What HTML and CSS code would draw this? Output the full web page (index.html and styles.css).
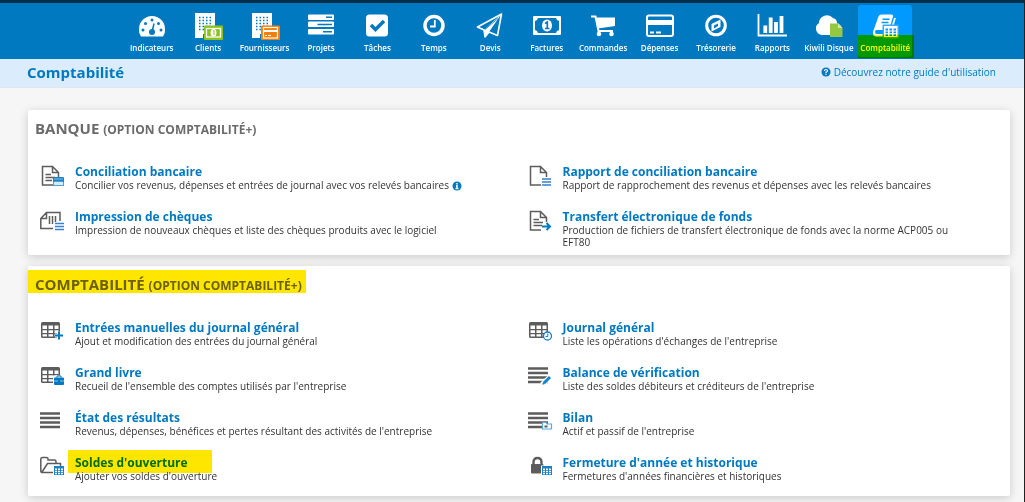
FILE: index.html
```html
<!DOCTYPE html>
<html lang="fr">
<head>
<meta charset="utf-8">
<title>Comptabilité</title>
<link rel="stylesheet" href="styles.css">
</head>
<body>
<svg class="defs" aria-hidden="true">
  <defs>
    <g id="building" fill="#fff">
      <path d="M2 1H22V26H14V22H10V26H2Z"/>
      <path d="M6 5.500H19M6 8.500H19M6 11.500H19M6 14.500H19M6 17.500H19" stroke="#0079c1" stroke-width="1.300" stroke-dasharray="1.500 2"/>
    </g>
    <g id="page" fill="none" stroke="#5c5c5c" stroke-width="1.500">
      <path d="M18.500 12V7.500L12.500 1.500H2.500V20H13M12.500 1.500V7.500H18.500"/>
    </g>
    <g id="grid">
      <rect x="1" y="1" width="19" height="16" rx="1.500" fill="#5c5c5c"/>
      <path d="M2.500 4.500H7V8H2.500ZM8.500 4.500H13V8H8.500ZM14.500 4.500H18.500V8H14.500ZM2.500 9.200H7V12H2.500ZM8.500 9.200H13V12H8.500ZM14.500 9.200H18.500V12H14.500ZM2.500 13.200H7V15.500H2.500ZM8.500 13.200H13V15.500H8.500ZM14.500 13.200H18.500V15.500H14.500Z" fill="#fff"/>
    </g>
    <path id="bars" d="M0 2.500H20M0 7H20M0 11.500H20M0 16H20" stroke="#5c5c5c" stroke-width="2.700"/>
    <g id="sheet">
      <rect x="14" y="10" width="10" height="9" fill="#1682c9"/>
      <path d="M15 12.500H17V14H15ZM18 12.500H20V14H18ZM21 12.500H23V14H21ZM15 14.700H17V16H15ZM18 14.700H20V16H18ZM21 14.700H23V16H21ZM15 16.800H17V18.200H15ZM18 16.800H20V18.200H18ZM21 16.800H23V18.200H21Z" fill="#fff"/>
    </g>
  </defs>
</svg>
<header class="topbar">
  <nav class="nav" aria-label="Navigation principale">
    <a class="nav-item" href="#"><svg class="nav-icon" viewBox="0 0 30 28"><path d="M4 24.500Q1.500 21 2 17A13 13 0 0 1 28 17Q28.500 21 26 24.500Z" fill="#fff"/><g fill="#0079c1"><circle cx="6" cy="18" r="1.500"/><circle cx="8.500" cy="11.500" r="1.500"/><circle cx="15" cy="8" r="1.500"/><circle cx="21.500" cy="11.500" r="1.500"/><circle cx="24" cy="18" r="1.500"/><circle cx="15" cy="20" r="3"/></g><path d="M15 20L17 11.500" stroke="#0079c1" stroke-width="1.500"/></svg><span>Indicateurs</span></a>
    <a class="nav-item" href="#"><svg class="nav-icon" viewBox="0 0 30 28"><use href="#building"/><rect x="11" y="13.500" width="19" height="14.500" rx="1" fill="#8cc220"/><rect x="13.500" y="16.500" width="14" height="8.500" fill="none" stroke="#fff" stroke-width="1.300"/><ellipse cx="20.500" cy="20.700" rx="3" ry="3.800" fill="#fff"/><path d="M20 19L21 18.500V23" fill="none" stroke="#8cc220"/></svg><span>Clients</span></a>
    <a class="nav-item" href="#"><svg class="nav-icon" viewBox="0 0 30 28"><use href="#building"/><rect x="11" y="13.500" width="19" height="14.500" rx="1" fill="#f57e0a"/><rect x="13.500" y="15.500" width="14" height="10.500" fill="none" stroke="#fff" stroke-width="1.200"/><path d="M13.500 19H27.500" stroke="#fff" stroke-width="2"/><path d="M15 23.500H17M18 23.500H21" stroke="#fff"/></svg><span>Fournisseurs</span></a>
    <a class="nav-item" href="#"><svg class="nav-icon" viewBox="0 0 30 28"><g fill="#fff"><rect x="2" y="2.500" width="26" height="5.500" rx="1"/><rect x="2" y="9.500" width="26" height="5.500" rx="1"/><rect x="2" y="17" width="26" height="5.500" rx="1"/></g><path d="M20 5.200H26M11.500 12.400H26M17 19.700H26" stroke="#0079c1" stroke-width="1.500"/></svg><span>Projets</span></a>
    <a class="nav-item" href="#"><svg class="nav-icon" viewBox="0 0 30 28"><rect x="4" y="2.500" width="22" height="22" rx="3.500" fill="#fff"/><path d="M9 13L13.500 17.500L22 9" fill="none" stroke="#0079c1" stroke-width="3.500"/></svg><span>Tâches</span></a>
    <a class="nav-item" href="#"><svg class="nav-icon" viewBox="0 0 30 28"><circle cx="15" cy="13.500" r="9" fill="none" stroke="#fff" stroke-width="3.500"/><path d="M15.800 8V14.500H11" fill="none" stroke="#fff" stroke-width="1.800"/></svg><span>Temps</span></a>
    <a class="nav-item" href="#"><svg class="nav-icon" viewBox="0 0 30 28"><path d="M26.500 2L2.500 15L9 18L10 25L14 20L22.500 23.500Z" fill="none" stroke="#fff" stroke-width="1.600" stroke-linejoin="round"/><path d="M26 2.500L9 18L10 25L14 20Z" fill="#fff"/><path d="M23 6.500L10 17.500" stroke="#0079c1" stroke-width=".8"/></svg><span>Devis</span></a>
    <a class="nav-item" href="#"><svg class="nav-icon" viewBox="0 0 30 28"><rect x="1" y="4" width="28" height="19" rx="1" fill="#fff"/><path d="M6 6H24Q24.500 8.500 27 9V18Q24.500 18.500 24 21H6Q5.500 18.500 3 18V9Q5.500 8.500 6 6Z" fill="#0079c1"/><ellipse cx="15" cy="13.500" rx="5" ry="6" fill="#fff"/><path d="M13 11.500L15.300 10V16M13 16.500H17.500" fill="none" stroke="#0079c1" stroke-width="1.700"/></svg><span>Factures</span></a>
    <a class="nav-item" href="#"><svg class="nav-icon" viewBox="0 0 30 28"><path d="M3 4.500H7.500L10.500 19H25" fill="none" stroke="#fff" stroke-width="2"/><path d="M7.500 5.500H27V14L10 16.500Z" fill="#fff"/><circle cx="11" cy="22" r="2.300" fill="#fff"/><circle cx="23.500" cy="22" r="2.300" fill="#fff"/></svg><span>Commandes</span></a>
    <a class="nav-item" href="#"><svg class="nav-icon" viewBox="0 0 30 28"><rect x="2" y="3.500" width="26" height="20.500" rx="2" fill="none" stroke="#fff" stroke-width="2"/><path d="M2 10.500H28" stroke="#fff" stroke-width="5"/><path d="M5 20.500H9M11 20.500H16" stroke="#fff" stroke-width="1.800"/></svg><span>Dépenses</span></a>
    <a class="nav-item" href="#"><svg class="nav-icon" viewBox="0 0 30 28"><circle cx="15" cy="13.500" r="9.300" fill="none" stroke="#fff" stroke-width="3"/><path d="M19.500 7.500V15L10.500 19.500V12Z" fill="#fff"/><path d="M13 13.500L17 11.500V14L13 16.500Z" fill="#0079c1"/></svg><span>Trésorerie</span></a>
    <a class="nav-item" href="#"><svg class="nav-icon" viewBox="0 0 30 28"><path d="M1.500 2V23.500H30" fill="none" stroke="#fff" stroke-width="1.800"/><path d="M8.300 13.500V21M13.700 5.500V21M19 10V21M24.500 4V21" stroke="#fff" stroke-width="3.800"/></svg><span>Rapports</span></a>
    <a class="nav-item" href="#"><svg class="nav-icon" viewBox="0 0 30 28"><path d="M8 23A6.500 6.500 0 0 1 5 11A8 8 0 0 1 19 6Q23 7 23 11Q28 13 28 18Q27 23 22 23Z" fill="#fff"/><path d="M16 11.500H24L28.500 16V25H16Z" fill="#94c840"/><path d="M24 11.500V16H28.500Z" fill="#d2e8a8"/></svg><span>Kiwili Disque</span></a>
    <a class="nav-item active" href="#" aria-current="page"><svg class="nav-icon" viewBox="0 0 30 28"><path d="M11.500 2.500H21.500Q23.500 2.500 23 4.500L19.500 16.500Q19 18 17 18H6.500Q5 18 5 20Q5 22 7 22H15V24.500H6.500Q3 24.500 3 21Q3 19 4 17L8.500 4.500Q9.200 2.500 11.500 2.500Z" fill="#fff"/><path d="M12.500 7.200H19.500M11.500 10.500H18.500" stroke="#0099ff" stroke-width="1.500"/><path d="M25 6L22 15.500" stroke="#fff" stroke-width="1.800"/><rect x="12.500" y="12.500" width="16.500" height="14" rx="1" fill="#32acff"/><path d="M14 14H27.500V25H14Z" fill="#fff"/><path d="M15.500 16.500H18V18.500H15.500ZM19.500 16.500H22V18.500H19.500ZM23.500 16.500H26V18.500H23.500ZM15.500 19.500H18V21.300H15.500ZM19.500 19.500H22V21.300H19.500ZM23.500 19.500H26V21.300H23.500ZM15.500 22.300H18V24H15.500ZM19.500 22.300H22V24H19.500ZM23.500 22.300H26V24H23.500Z" fill="#0099ff"/></svg><span>Comptabilité</span></a>
  </nav>
</header>
<div class="subheader">
  <h1 class="page-title">Comptabilité</h1>
  <a class="guide" href="#"><svg class="badge" viewBox="0 0 10 10"><circle cx="5" cy="5" r="4.500" fill="#0079c1"/><path d="M3.500 4Q3.500 2.500 5 2.500Q6.500 2.500 6.500 4Q6.300 5 5 5.200V6M5 6.700V8" fill="none" stroke="#fff" stroke-width="1.200"/></svg>Découvrez notre guide d'utilisation</a>
</div>
<main class="content">
  <section class="card">
    <h2 class="card-title"><span>BANQUE <small>(OPTION COMPTABILITÉ+)</small></span></h2>
    <div class="entries">
      <article class="entry"><svg class="entry-icon" viewBox="0 0 26 22"><use href="#page"/><path d="M5.500 9.500H11M5.500 12.500H15M5.500 15.500H12" stroke="#5c5c5c" stroke-width="1.500"/><rect x="13" y="12" width="11" height="9" rx="1" fill="#1682c9"/><path d="M14 14H23M14 17H23V20H14Z" fill="#d7ecfb" stroke="#d7ecfb" stroke-width=".6"/></svg>
        <div><h3 class="entry-title"><a href="#">Conciliation bancaire</a></h3><p class="entry-text">Concilier vos revenus, dépenses et entrées de journal avec vos relevés bancaires <svg class="badge" viewBox="0 0 10 10"><circle cx="5" cy="5" r="4.500" fill="#0079c1"/><path d="M5 2V3.500M4 4.700H5V7.500M3.500 7.500H6.500" fill="none" stroke="#fff" stroke-width="1.400"/></svg></p></div></article>
      <article class="entry"><svg class="entry-icon" viewBox="0 0 26 22"><use href="#page"/><path d="M14 14H23M14 17H23M14 20H23" stroke="#3480d3" stroke-width="1.300"/></svg>
        <div><h3 class="entry-title"><a href="#">Rapport de conciliation bancaire</a></h3><p class="entry-text">Rapport de rapprochement des revenus et dépenses avec les relevés bancaires</p></div></article>
      <article class="entry"><svg class="entry-icon" viewBox="0 0 26 22"><path d="M13 18.500H.8V8.500L6.500 2.500H20V11M6.500 2.500V8.500H.8M9.500 6V14M12.500 6V14M15.500 6V12" fill="none" stroke="#5c5c5c" stroke-width="1.500"/><path d="M15 13.500H24M15 16.500H24M15 19.500H24" stroke="#3480d3" stroke-width="1.400"/></svg>
        <div><h3 class="entry-title"><a href="#">Impression de chèques</a></h3><p class="entry-text">Impression de nouveaux chèques et liste des chèques produits avec le logiciel</p></div></article>
      <article class="entry"><svg class="entry-icon" viewBox="0 0 26 22"><use href="#page"/><path d="M5.500 9.500H11M5.500 12.500H15M5.500 15.500H14" stroke="#5c5c5c" stroke-width="1.500"/><path d="M14 16.500H22M18.500 13L22 16.500L18.500 20" fill="none" stroke="#0079c1" stroke-width="2"/></svg>
        <div><h3 class="entry-title"><a href="#">Transfert électronique de fonds</a></h3><p class="entry-text">Production de fichiers de transfert électronique de fonds avec la norme ACP005 ou EFT80</p></div></article>
    </div>
  </section>
  <section class="card">
    <h2 class="card-title"><span class="marked">COMPTABILITÉ <small>(OPTION COMPTABILITÉ+)</small></span></h2>
    <div class="entries">
      <article class="entry"><svg class="entry-icon" viewBox="0 0 26 22"><use href="#grid"/><path d="M15 14.500H23M19 10.500V18.500" stroke="#fff" stroke-width="4"/><path d="M15 14.500H23M19 10.500V18.500" stroke="#0079c1" stroke-width="2"/></svg>
        <div><h3 class="entry-title"><a href="#">Entrées manuelles du journal général</a></h3><p class="entry-text">Ajout et modification des entrées du journal général</p></div></article>
      <article class="entry"><svg class="entry-icon" viewBox="0 0 26 22"><use href="#grid"/><circle cx="19.500" cy="15" r="4" fill="#fff" stroke="#1682c9" stroke-width="1.300"/><path d="M19.800 12.500V15.500H17.500" fill="none" stroke="#1682c9"/></svg>
        <div><h3 class="entry-title"><a href="#">Journal général</a></h3><p class="entry-text">Liste les opérations d'échanges de l'entreprise</p></div></article>
      <article class="entry"><svg class="entry-icon" viewBox="0 0 26 22"><use href="#grid"/><rect x="13" y="9.500" width="12" height="10" fill="#fff"/><rect x="14" y="11.500" width="10" height="7.500" rx="1" fill="#0079c1"/><path d="M17 11.500V10H21V11.500" fill="none" stroke="#0079c1"/><path d="M14 15H18M20 15H24" stroke="#a9d5f2" stroke-width=".8"/></svg>
        <div><h3 class="entry-title"><a href="#">Grand livre</a></h3><p class="entry-text">Recueil de l'ensemble des comptes utilisés par l'entreprise</p></div></article>
      <article class="entry"><svg class="entry-icon" viewBox="0 0 26 22"><use href="#bars"/><path d="M14 18.500L23 10" stroke="#fff" stroke-width="5"/><path d="M16 17L22 11" stroke="#1682c9" stroke-width="3"/><path d="M14.300 18.700L15 15.800L17.200 18Z" fill="#1682c9"/></svg>
        <div><h3 class="entry-title"><a href="#">Balance de vérification</a></h3><p class="entry-text">Liste des soldes débiteurs et créditeurs de l'entreprise</p></div></article>
      <article class="entry"><svg class="entry-icon" viewBox="0 0 26 22"><use href="#bars"/></svg>
        <div><h3 class="entry-title"><a href="#">État des résultats</a></h3><p class="entry-text">Revenus, dépenses, bénéfices et pertes résultant des activités de l'entreprise</p></div></article>
      <article class="entry"><svg class="entry-icon" viewBox="0 0 26 22"><use href="#bars"/><path d="M14.500 18V11.500H18L19 13H23.500V18Z" fill="#fff" stroke="#5aa9dd" stroke-width="1.200"/><path d="M16.500 15.500H19.500" stroke="#5c5c5c" stroke-width="2"/></svg>
        <div><h3 class="entry-title"><a href="#">Bilan</a></h3><p class="entry-text">Actif et passif de l'entreprise</p></div></article>
      <article class="entry"><svg class="entry-icon" viewBox="0 0 26 22"><path d="M13 16.500H2.500Q.8 16.500.8 15V3Q.8 1.500 2.500 1.500H6.500Q8 1.500 8 3V4H14.500Q16 4 16 5.500V7.500H7.500L2 16M16 7.500H20.500V10" fill="none" stroke="#5c5c5c" stroke-width="1.500"/><use href="#sheet"/></svg>
        <div><h3 class="entry-title"><a class="marked marked-link" href="#">Soldes d'ouverture</a></h3><p class="entry-text">Ajouter vos soldes d'ouverture</p></div></article>
      <article class="entry"><svg class="entry-icon" viewBox="0 0 26 22"><path d="M5.500 9V6Q5.500 2 9.500 2Q13.500 2 13.500 6V9" fill="none" stroke="#5c5c5c" stroke-width="2.400"/><rect x="3" y="8" width="12.500" height="9.500" rx="1" fill="#5c5c5c"/><rect x="13" y="9.500" width="12" height="10" fill="#fff"/><use href="#sheet"/></svg>
        <div><h3 class="entry-title"><a href="#">Fermeture d'année et historique</a></h3><p class="entry-text">Fermetures d'années financières et historiques</p></div></article>
    </div>
  </section>
</main>
</body>
</html>
```
FILE: styles.css
```css
* {
  box-sizing: border-box;
}

body {
  margin: 0;
  min-height: 100vh;
  border-right: 1px solid #222;
  background: #f6f6f6;
  color: #333;
  font-family: "Open Sans", "Noto Sans", sans-serif;
  font-size: 10px;
  line-height: 12px;
}

a {
  color: #0079c1;
  text-decoration: none;
}

.defs {
  display: block;
  width: 0;
  height: 0;
}

.topbar {
  padding-left: 13px;
  border-top: 3px solid #033048;
  background: #0079c1;
}

.nav {
  display: grid;
  grid-template-columns: repeat(14, 1fr);
  gap: 2px;
  max-width: 788px;
  margin: 0 auto;
  padding: 2px 0;
}

.nav-item {
  position: relative;
  display: flex;
  flex-direction: column;
  align-items: center;
  gap: 2px;
  height: 52px;
  padding-top: 7px;
  border-radius: 3px;
  color: #fff;
  font-size: 8px;
  font-weight: 600;
  white-space: nowrap;
}

.nav-icon {
  width: 30px;
  height: 28px;
  flex: none;
}

.nav-item.active {
  background: #0099ff;
}

.nav-item.active::after {
  content: "";
  position: absolute;
  inset: 30px -2px -1px 0;
  background: #ff0;
  mix-blend-mode: multiply;
}

.subheader {
  display: flex;
  align-items: center;
  justify-content: space-between;
  height: 29px;
  padding: 0 28px 2px 27px;
  border-bottom: 1px solid #dfe6ec;
  background: #dbedfd;
}

.page-title {
  margin: 0;
  color: #0079c1;
  font-size: 15px;
  font-weight: 700;
  line-height: 20px;
}

.guide {
  display: flex;
  align-items: center;
  gap: 3px;
}

.badge {
  width: 10px;
  height: 10px;
  vertical-align: -2px;
}

.content {
  display: flex;
  flex-direction: column;
  gap: 11px;
  padding: 22px 14px 5px 28px;
}

.card {
  padding: 8px 8px 7px 7px;
  border-radius: 2px;
  background: #fff;
  box-shadow: 0 2px 10px rgba(0, 0, 0, 0.18);
}

.card-title {
  margin: 0 0 25px;
  color: #6b6b6b;
  font-size: 15px;
  font-weight: 700;
  line-height: 20px;
}

.card-title small {
  font-size: 12px;
}

.marked {
  position: relative;
}

.marked::after {
  content: "";
  position: absolute;
  inset: -4px -4px 1px -7px;
  background: #ffe600;
  mix-blend-mode: multiply;
}

.marked-link::after {
  inset: -4px -24px -2px -7px;
}

.entries {
  display: grid;
  grid-template-columns: 1fr 1fr;
  gap: 12px 8px;
}

.entry {
  display: flex;
  gap: 9px;
  min-height: 33px;
  padding: 0 50px 0 5px;
}

.entry-icon {
  width: 26px;
  height: 22px;
  flex: none;
}

.entry-title {
  margin: 0;
  font-size: 12px;
  font-weight: 700;
  line-height: 14px;
}

.entry-text {
  margin: 0;
}
```
